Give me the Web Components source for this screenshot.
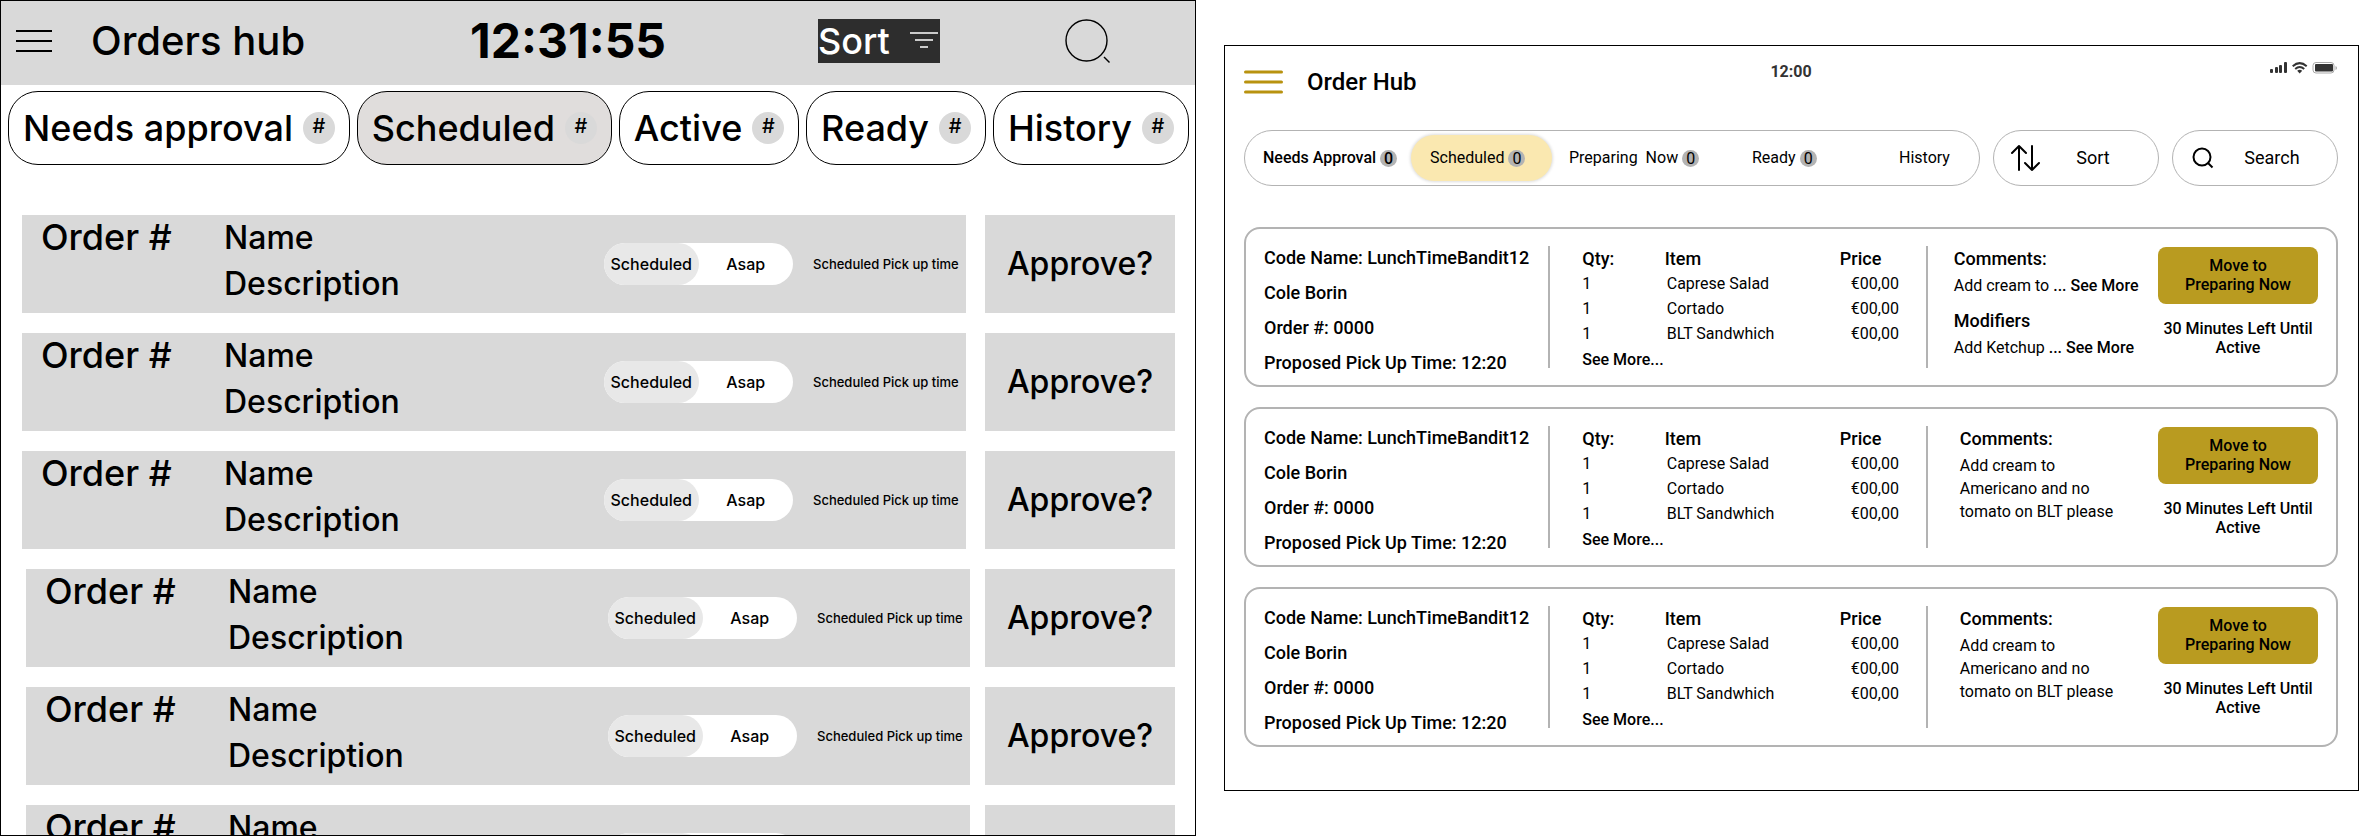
<!DOCTYPE html>
<html lang="en">
<head>
<meta charset="utf-8">
<title>Orders hub</title>
<style>
  body{
    margin: 0;
    background: #ffffff;
    color: #000000;
  }
</style>
</head>
<body>
<hub-boards>
  <wireframe-board></wireframe-board>
  <final-board></final-board>
</hub-boards>

<script>
// the two boards side by side
class HubBoards extends HTMLElement{
  constructor(){
    super();
    this.attachShadow({ mode: 'open' });
    this.shadowRoot.innerHTML = `
      <style>
        :host{
          display: grid;
          grid-template-columns: minmax(0, 1196fr) minmax(0, 1135fr);
          gap: 28px;
          height: 100vh;
          overflow: hidden;
        }
      </style>
      <slot></slot>
    `;
  }
}
customElements.define('hub-boards', HubBoards);

// tab of the wireframe, with its round counter
class WireTab extends HTMLElement{
  constructor(){
    super();
    this.attachShadow({ mode: 'open' });
    this.shadowRoot.innerHTML = `
      <style>
        :host{
          display: block;
        }
        button{
          display: flex;
          align-items: center;
          gap: 10px;
          height: 74px;
          padding: 0 14px;
          background: #ffffff;
          border: 1px solid #000000;
          border-radius: 30px;
          color: inherit;
          font: 500 36px/44px Inter, sans-serif;
          white-space: nowrap;
          cursor: pointer;
        }
        :host([selected]) button{
          background: #e0dddc;
        }
        .count{
          width: 32px;
          height: 32px;
          border-radius: 50%;
          background: #d9d9d9;
          font-size: 20px;
          line-height: 28px;
          text-align: center;
        }
      </style>
      <button type="button"><slot></slot><span class="count">#</span></button>
    `;
  }
}
customElements.define('wire-tab', WireTab);

// scheduled / asap switch
class TimeToggle extends HTMLElement{
  constructor(){
    super();
    this.attachShadow({ mode: 'open' });
    this.shadowRoot.innerHTML = `
      <style>
        :host{
          display: grid;
          grid-template-columns: 1fr 1fr;
          width: 189px;
          background: #ffffff;
          border-radius: 21px;
          font: 500 16px/42px Inter, sans-serif;
          text-align: center;
        }
        label{
          border-radius: 21px;
          cursor: pointer;
        }
        label:has(:checked){
          background: #e8e8e8;
        }
        input{
          appearance: none;
          display: block;
          width: 0;
          height: 0;
          margin: 0;
        }
      </style>
      <label><input type="radio" name="when" checked>Scheduled</label>
      <label><input type="radio" name="when">Asap</label>
    `;
  }
}
customElements.define('time-toggle', TimeToggle);

class WireOrder extends HTMLElement{
  constructor(){
    super();
    this.attachShadow({ mode: 'open' });
    this.shadowRoot.innerHTML = `
      <style>
        :host{
          display: grid;
          grid-template-columns: minmax(0, 1fr) 190px;
          gap: 19px;
          padding: 0 20px 0 21px;
          font: 500 32px/46px Inter, sans-serif;
        }
        :host([inset]){
          gap: 15px;
          padding-left: 25px;
        }
        .order{
          display: grid;
          grid-template-columns: 183fr 380fr 209fr 153fr;
          align-items: center;
          height: 98px;
          padding-left: 19px;
          background: #d9d9d9;
          white-space: nowrap;
        }
        .number{
          align-self: start;
          font-size: 36px;
          line-height: 44px;
        }
        .text{
          display: grid;
          align-self: start;
        }
        .pickup{
          font-size: 13px;
        }
        button{
          border: none;
          background: #d9d9d9;
          color: inherit;
          font: inherit;
          cursor: pointer;
        }
      </style>
      <div class="order">
        <span class="number">Order #</span>
        <div class="text"><span>Name</span><span>Description</span></div>
        <time-toggle></time-toggle>
        <span class="pickup">Scheduled Pick up time</span>
      </div>
      <button type="button">Approve?</button>
    `;
  }
}
customElements.define('wire-order', WireOrder);

class WireframeBoard extends HTMLElement{
  constructor(){
    super();
    this.attachShadow({ mode: 'open' });
    this.shadowRoot.innerHTML = `
      <style>
        :host{
          display: block;
          box-sizing: border-box;
          height: 100vh;
          overflow: hidden;
          border: 1px solid #000000;
          font-family: Inter, sans-serif;
        }
        header{
          display: grid;
          grid-template-columns: 75fr 379fr 348fr 247fr 130fr;
          align-items: center;
          justify-items: start;
          height: 80px;
          padding: 0 0 4px 15px;
          background: #d9d9d9;
          white-space: nowrap;
        }
        header button{
          padding: 0;
          border: none;
          background: none;
          cursor: pointer;
        }
        svg{
          display: block;
        }
        h1{
          margin: 0;
          font: 500 40px/48px Inter, sans-serif;
        }
        time{
          font: 700 48px/56px Inter, sans-serif;
        }
        header .sort{
          display: flex;
          align-items: center;
          gap: 20px;
          padding: 0 2px 0 0;
          background: #2d2d2d;
          color: #ffffff;
          font: 500 36px/44px Inter, sans-serif;
        }
        nav{
          display: flex;
          justify-content: space-between;
          padding: 6px 6px 0 7px;
        }
        main{
          display: grid;
          gap: 20px;
          padding-top: 50px;
        }
      </style>
      <header>
        <button type="button" aria-label="Menu">
          <svg width="36" height="22" stroke="#000" stroke-width="2"><path d="M0 1H36M0 11H36M0 21H36"/></svg>
        </button>
        <h1>Orders hub</h1>
        <time>12:31:55</time>
        <button type="button" class="sort">Sort
          <svg width="28" height="22" stroke="#fff" stroke-width="1.500" fill="none"><path d="M0 3H28M5 10H23M10 17H18"/></svg>
        </button>
        <button type="button" aria-label="Search">
          <svg width="46" height="44" stroke="#000" stroke-width="1.400" fill="none"><circle cx="21.500" cy="21.500" r="20.500"/><path d="M39 38L44.500 43.500"/></svg>
        </button>
      </header>
      <nav>
        <wire-tab>Needs approval</wire-tab>
        <wire-tab selected>Scheduled</wire-tab>
        <wire-tab>Active</wire-tab>
        <wire-tab>Ready</wire-tab>
        <wire-tab>History</wire-tab>
      </nav>
      <main>
        <wire-order></wire-order>
        <wire-order></wire-order>
        <wire-order></wire-order>
        <wire-order inset></wire-order>
        <wire-order inset></wire-order>
        <wire-order inset></wire-order>
      </main>
    `;
  }
}
customElements.define('wireframe-board', WireframeBoard);

class HubTab extends HTMLElement{
  constructor(){
    super();
    this.attachShadow({ mode: 'open' });
    const count = this.getAttribute('count');
    this.shadowRoot.innerHTML = `
      <style>
        :host{
          display: block;
        }
        button{
          display: flex;
          align-items: center;
          gap: 4px;
          width: 100%;
          height: 46px;
          padding: 0;
          border: none;
          border-radius: 23px;
          background: none;
          color: inherit;
          font: 400 16px/20px Roboto, sans-serif;
          white-space: pre;
          cursor: pointer;
        }
        :host([strong]) button{
          font-weight: 500;
        }
        :host([indent]) button{
          padding-left: 17px;
        }
        :host([selected]) button{
          padding-left: 19px;
          background: #fae8b0;
          box-shadow: 0 0 3px 1px #dddddd;
        }
        .count{
          width: 17px;
          border-radius: 50%;
          background: #b3b3b3;
          line-height: 17px;
          text-align: center;
        }
      </style>
      <button type="button"><slot></slot>${count ? `<span class="count">${count}</span>` : ''}</button>
    `;
  }
}
customElements.define('hub-tab', HubTab);

class HubAction extends HTMLElement{
  constructor(){
    super();
    this.attachShadow({ mode: 'open' });
    this.shadowRoot.innerHTML = `
      <style>
        :host{
          display: block;
        }
        button{
          display: grid;
          grid-template-columns: 46px 1fr;
          align-items: center;
          width: 100%;
          height: 56px;
          padding: 0 28px 0 16px;
          border: 1px solid #b3b3b3;
          border-radius: 28px;
          background: #ffffff;
          color: inherit;
          font: 400 18px/24px Roboto, sans-serif;
          cursor: pointer;
        }
        ::slotted(svg){
          display: block;
        }
      </style>
      <button type="button"><slot name="icon"></slot><span><slot></slot></span></button>
    `;
  }
}
customElements.define('hub-action', HubAction);

// one order; the notes come in through the slot
class OrderCard extends HTMLElement{
  constructor(){
    super();
    this.attachShadow({ mode: 'open' });
    this.shadowRoot.innerHTML = `
      <style>
        :host{
          display: grid;
          grid-template-columns: 284fr 2px 375fr 2px 230fr 160px;
          padding: 17px 18px 13px;
          border: 2px solid #b3b3b3;
          border-radius: 16px;
          font: 400 16px/25px Roboto, sans-serif;
          white-space: nowrap;
        }
        .info{
          display: grid;
          align-content: start;
          gap: 17px;
          padding-top: 3px;
          font-size: 18px;
          font-weight: 500;
          line-height: 18px;
        }
        .line{
          margin-bottom: 4px;
          background: #b3b3b3;
        }
        .items{
          padding-left: 32px;
        }
        table{
          width: 100%;
          table-layout: fixed;
          border-collapse: collapse;
        }
        th, td{
          padding: 0;
          text-align: left;
        }
        th{
          font-size: 18px;
          font-weight: 500;
          line-height: 25px;
        }
        th:nth-child(1){
          width: 24%;
        }
        th:nth-child(2){
          width: 51%;
        }
        td:nth-child(2){
          padding-left: 2px;
        }
        td:nth-child(3){
          padding-left: 11px;
        }
        a{
          display: block;
          padding-top: 4px;
          color: inherit;
          font-weight: 500;
          line-height: 20px;
          text-decoration: none;
        }
        .notes{
          display: grid;
          align-content: start;
          gap: 11px;
          padding-left: 26px;
        }
        :host([full]) .notes{
          padding-left: 32px;
        }
        .action{
          font-weight: 500;
          line-height: 19px;
          text-align: center;
        }
        button{
          display: block;
          width: 100%;
          margin: 1px 0 15px;
          padding: 9px 0 10px;
          border: none;
          border-radius: 8px;
          background: #b99b20;
          color: inherit;
          font: inherit;
          cursor: pointer;
        }
      </style>
      <div class="info">
        <span>Code Name: LunchTimeBandit12</span>
        <span>Cole Borin</span>
        <span>Order #: 0000</span>
        <span>Proposed Pick Up Time: 12:20</span>
      </div>
      <div class="line"></div>
      <div class="items">
        <table>
          <tr><th>Qty:</th><th>Item</th><th>Price</th></tr>
          <tr><td>1</td><td>Caprese Salad</td><td>€00,00</td></tr>
          <tr><td>1</td><td>Cortado</td><td>€00,00</td></tr>
          <tr><td>1</td><td>BLT Sandwhich</td><td>€00,00</td></tr>
        </table>
        <a href="#">See More...</a>
      </div>
      <div class="line"></div>
      <div class="notes"><slot></slot></div>
      <div class="action">
        <button type="button">Move to<br>Preparing Now</button>
        <span>30 Minutes Left Until<br>Active</span>
      </div>
    `;
  }
}
customElements.define('order-card', OrderCard);

class OrderNote extends HTMLElement{
  constructor(){
    super();
    this.attachShadow({ mode: 'open' });
    this.shadowRoot.innerHTML = `
      <style>
        :host{
          display: block;
        }
        h3{
          margin: 0 0 2px;
          font-size: 18px;
          font-weight: 500;
          line-height: 26px;
        }
        p{
          margin: 0;
          line-height: 23px;
        }
        a{
          color: inherit;
          font-weight: 500;
          text-decoration: none;
        }
      </style>
      <h3>${this.getAttribute('heading')}</h3>
      <p><slot></slot>${this.hasAttribute('more') ? ' <a href="#">... See More</a>' : ''}</p>
    `;
  }
}
customElements.define('order-note', OrderNote);

class FinalBoard extends HTMLElement{
  constructor(){
    super();
    this.attachShadow({ mode: 'open' });
    this.shadowRoot.innerHTML = `
      <style>
        :host{
          display: block;
          align-self: start;
          margin-top: 45px;
          padding: 0 20px 43px 19px;
          border: 1px solid #000000;
          font-family: Roboto, sans-serif;
        }
        header{
          display: grid;
          grid-template-columns: 1fr auto 1fr;
          align-items: start;
          height: 68px;
          padding-top: 16px;
        }
        .brand{
          display: flex;
          align-items: center;
          gap: 24px;
          padding-top: 6px;
        }
        .brand button{
          padding: 0;
          border: none;
          background: none;
          cursor: pointer;
        }
        svg{
          display: block;
        }
        h1{
          margin: 0;
          font: 500 24px/28px Roboto, sans-serif;
        }
        time{
          color: #333333;
          font: 700 16px/20px Roboto, sans-serif;
        }
        .status{
          justify-self: end;
        }
        .tools{
          display: grid;
          grid-template-columns: 736fr 166fr 166fr;
          column-gap: 13px;
        }
        nav{
          display: grid;
          grid-template-columns: 148fr 141fr 200fr 147fr 80fr;
          align-items: center;
          height: 54px;
          padding-left: 18px;
          border: 1px solid #b3b3b3;
          border-radius: 28px;
        }
        main{
          display: grid;
          gap: 20px;
          padding-top: 41px;
        }
      </style>
      <header>
        <div class="brand">
          <button type="button" aria-label="Menu">
            <svg width="39" height="24" stroke="#b8920f" stroke-width="3" stroke-linecap="round"><path d="M1.500 2H37.500M1.500 12H37.500M1.500 22H37.500"/></svg>
          </button>
          <h1>Order Hub</h1>
        </div>
        <time>12:00</time>
        <svg class="status" width="68" height="12" fill="#333">
          <rect x="0" y="7" width="3" height="4" rx="1"/><rect x="5" y="5" width="3" height="6" rx="1"/><rect x="9" y="3" width="3" height="8" rx="1"/><rect x="14" y="0" width="3" height="11" rx="1"/>
          <path d="M22.700 4.200Q29.700 -2 36.700 4.200M25.200 7Q29.700 3 34.200 7" fill="none" stroke="#333" stroke-width="2"/>
          <path d="M27.200 8.800Q29.700 6.800 32.200 8.800L29.700 11.500Z"/>
          <rect x="43" y="0.500" width="21" height="10.500" rx="3" fill="none" stroke="#aaa"/>
          <rect x="45" y="2" width="18" height="7.500" rx="1"/>
          <path d="M65.500 4V8Q67 7.500 67 6T65.500 4Z" fill="#aaa"/>
        </svg>
      </header>
      <div class="tools">
        <nav>
          <hub-tab strong count="0">Needs Approval</hub-tab>
          <hub-tab selected count="0">Scheduled</hub-tab>
          <hub-tab indent count="0">Preparing  Now</hub-tab>
          <hub-tab count="0">Ready</hub-tab>
          <hub-tab>History</hub-tab>
        </nav>
        <hub-action>
          <svg slot="icon" width="30" height="28" fill="none" stroke="#000" stroke-width="2" stroke-linecap="round" stroke-linejoin="round"><path d="M9 26V2M2 9L9 2L16 9M22 2V26M15 19L22 26L29 19"/></svg>
          Sort
        </hub-action>
        <hub-action>
          <svg slot="icon" width="28" height="24" fill="none" stroke="#000" stroke-width="2"><circle cx="13" cy="11" r="8.500"/><path d="M19 17L23.500 21.500"/></svg>
          Search
        </hub-action>
      </div>
      <main>
        <order-card>
          <order-note heading="Comments:" more>Add cream to</order-note>
          <order-note heading="Modifiers" more>Add Ketchup</order-note>
        </order-card>
        <order-card full>
          <order-note heading="Comments:">Add cream to<br>Americano and no<br>tomato on BLT please</order-note>
        </order-card>
        <order-card full>
          <order-note heading="Comments:">Add cream to<br>Americano and no<br>tomato on BLT please</order-note>
        </order-card>
      </main>
    `;
  }
}
customElements.define('final-board', FinalBoard);
</script>
</body>
</html>
